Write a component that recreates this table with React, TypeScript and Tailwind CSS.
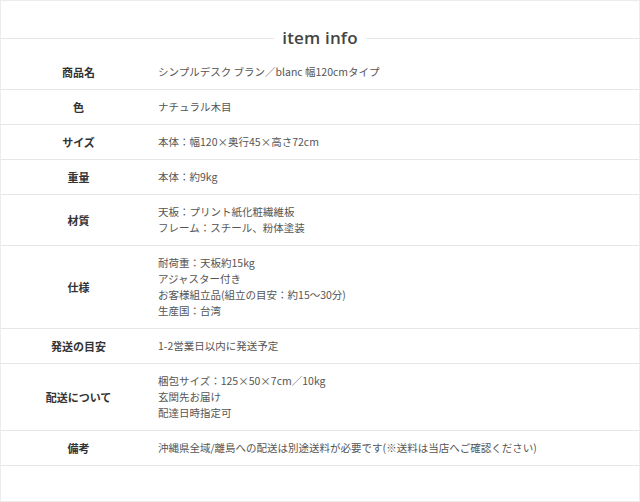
import React from "react";

const rows: { label: string; lines: string[] }[] = [
  { label: "商品名", lines: ["シンプルデスク ブラン／blanc 幅120cmタイプ"] },
  { label: "色", lines: ["ナチュラル木目"] },
  { label: "サイズ", lines: ["本体：幅120×奥行45×高さ72cm"] },
  { label: "重量", lines: ["本体：約9kg"] },
  { label: "材質", lines: ["天板：プリント紙化粧繊維板", "フレーム：スチール、粉体塗装"] },
  {
    label: "仕様",
    lines: ["耐荷重：天板約15kg", "アジャスター付き", "お客様組立品(組立の目安：約15～30分)", "生産国：台湾"],
  },
  { label: "発送の目安", lines: ["1-2営業日以内に発送予定"] },
  { label: "配送について", lines: ["梱包サイズ：125×50×7cm／10kg", "玄関先お届け", "配達日時指定可"] },
  { label: "備考", lines: ["沖縄県全域/離島への配送は別途送料が必要です(※送料は当店へご確認ください)"] },
];

export default function App() {
  return (
    <div
      className="w-[640px] h-[502px] bg-white border border-[#ececec] overflow-hidden"
      style={{ fontFamily: '"Noto Sans CJK JP", "Noto Sans", sans-serif' }}
    >
      <div className="mt-[27px] mb-[7px] flex items-center h-[20px]">
        <div className="flex-1 h-px bg-[#e6e6e6]" />
        <div
          className="px-[8px] text-[17px] leading-[20px] font-semibold tracking-[0.01em] text-[#444]"
          style={{ fontFamily: '"Open Sans", sans-serif' }}
        >
          item info
        </div>
        <div className="flex-1 h-px bg-[#e6e6e6]" />
      </div>
      <div>
        {rows.map((r) => (
          <div key={r.label} className="flex items-center border-b border-[#e6e6e6] py-[9px]">
            <div className="w-[155px] shrink-0 text-center text-[11px] leading-[16px] font-bold text-[#333]">
              {r.label}
            </div>
            <div className="pl-[2px] text-[10.5px] leading-[16px] text-[#555]">
              {r.lines.map((l, i) => (
                <div key={i}>{l}</div>
              ))}
            </div>
          </div>
        ))}
      </div>
    </div>
  );
}
